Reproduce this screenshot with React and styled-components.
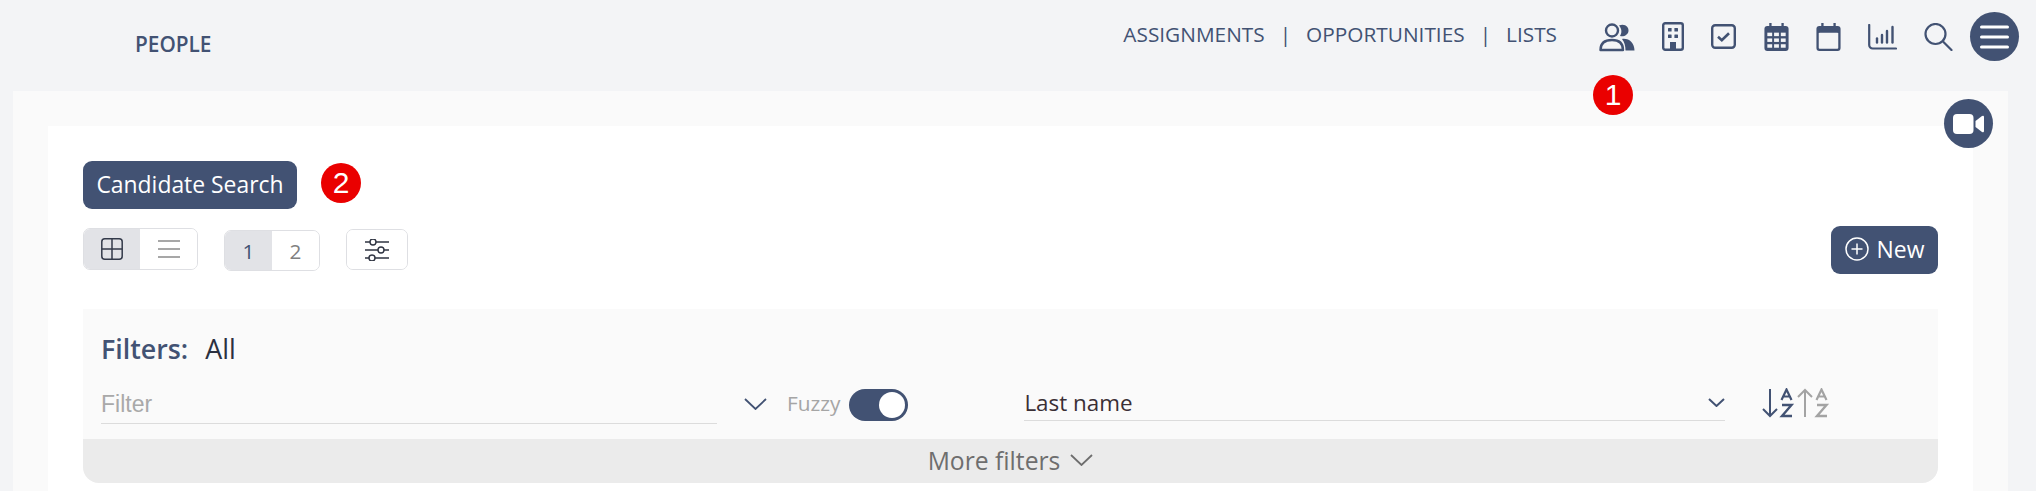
import React from "react";
import styled, { createGlobalStyle } from "styled-components";

const navy = "#425273";

const Global = createGlobalStyle`
  html, body { margin: 0; padding: 0; height: 100%; overflow: hidden; background: #f3f4f6; }
  body { font-family: "Open Sans", "Liberation Sans", sans-serif; color: ${navy}; }
  #root { position: relative; height: 491px; overflow: hidden; }
  * { box-sizing: border-box; }
`;

const Header = styled.header`
  height: 91px;
  display: flex;
  align-items: flex-start;
  padding: 12px 17px 0 135px;
  position: relative;
`;
const Brand = styled.div`
  font-size: 20.8px;
  font-weight: 600;
  line-height: 24px;
  margin-top: 20px;
  flex: 1;
`;
const Nav = styled.nav`
  display: flex;
  gap: 15px;
  font-size: 20.8px;
  line-height: 24px;
  margin-top: 10px;
  margin-right: 42px;
`;
const IconRow = styled.div`
  display: flex;
  align-items: center;
  height: 49px;
`;
const IconSlot = styled.span`
  display: flex;
  justify-content: center;
  width: ${p => p.$w}px;
  margin-right: ${p => p.$gap || 0}px;
  color: ${navy};
`;
const RoundButton = styled.div`
  width: 49px;
  height: 49px;
  border-radius: 50%;
  background: ${navy};
  display: flex;
  align-items: center;
  justify-content: center;
`;
const VideoButton = styled(RoundButton)`
  position: absolute;
  left: 1944px;
  top: 99px;
`;
const Badge = styled.span`
  position: absolute;
  left: ${p => p.$x}px;
  top: ${p => p.$y}px;
  width: 40px;
  height: 40px;
  border-radius: 50%;
  background: #ea0000;
  color: #fff;
  font-family: "Liberation Sans", Arial, sans-serif;
  font-size: 30px;
  line-height: 40px;
  text-align: center;
`;
const Outer = styled.main`
  margin: 0 28px 0 13px;
  padding: 35px 35px 0;
  background: #fafafa;
  height: 400px;
`;
const Card = styled.section`
  background: #fff;
  height: 365px;
  padding: 35px 35px 0;
`;
const Solid = styled.button`
  background: ${navy};
  color: #fff;
  border: 0;
  border-radius: 9px;
  font-family: inherit;
  font-size: 22.9px;
  height: 48px;
  display: flex;
  align-items: center;
  justify-content: center;
  gap: 8px;
  padding: 0 0 2px;
  width: ${p => p.$w}px;
  margin-top: ${p => p.$top || 0}px;
`;
const Toolbar = styled.div`
  display: flex;
  align-items: flex-start;
  margin-top: 19px;
  height: 64px;
`;
const Seg = styled.div`
  display: flex;
  height: ${p => p.$h}px;
  margin-top: ${p => p.$top}px;
  margin-right: ${p => p.$right}px;
  border: 1px solid #dedfe3;
  border-radius: 7px;
  overflow: hidden;
`;
const SegItem = styled.div`
  width: ${p => p.$w}px;
  display: flex;
  align-items: center;
  justify-content: center;
  background: ${p => (p.$on ? "#e2e3e7" : "#fff")};
  color: ${p => (p.$on ? navy : "#808080")};
  font-size: 20.8px;
`;
const Spacer = styled.div`
  flex: 1;
`;
const FilterPanel = styled.div`
  background: #fafafa;
  border-radius: 0 0 16px 16px;
  overflow: hidden;
  margin-top: 17px;
  height: 174px;
  display: flex;
  flex-direction: column;
`;
const FilterBody = styled.div`
  height: 130px;
  padding: 22px 18px 0;
`;
const FilterTitle = styled.div`
  font-size: 26.8px;
  line-height: 36px;
  display: flex;
  gap: 17px;
`;
const FilterLabel = styled.span`
  font-weight: 600;
`;
const FilterValue = styled.span`
  color: #2b3040;
`;
const FilterRow = styled.div`
  display: flex;
  align-items: flex-start;
  margin-top: 17px;
`;
const Underlined = styled.div`
  width: ${p => p.$w}px;
  height: ${p => p.$h}px;
  border-bottom: 1.5px solid #dcdcdc;
  display: flex;
  justify-content: space-between;
  align-items: center;
`;
const Placeholder = styled.span`
  font-family: "Liberation Sans", Arial, sans-serif;
  font-size: 23px;
  color: #a9a9a9;
  line-height: 32px;
`;
const SelectValue = styled.span`
  font-size: 22.4px;
  line-height: 30px;
  color: #3a2f35;
  padding-top: 2px;
`;
const ChevronSlot = styled.span`
  display: flex;
  margin: 14px 0 0 27px;
`;
const Fuzzy = styled.span`
  color: #a5a5a5;
  font-size: 20.8px;
  line-height: 30px;
  margin: 4px 9px 0 20px;
`;
const Toggle = styled.span`
  width: 59px;
  height: 32px;
  margin-top: 5px;
  margin-right: 116px;
  border-radius: 16px;
  background: ${navy};
  position: relative;
  flex: none;
`;
const Knob = styled.span`
  position: absolute;
  right: 3px;
  top: 3px;
  width: 26px;
  height: 26px;
  border-radius: 50%;
  background: #fff;
`;
const SortIcons = styled.div`
  display: flex;
  gap: 2px;
  margin: 4px 0 0 37px;
`;
const MoreBar = styled.div`
  height: 44px;
  background: #ebebeb;
  display: flex;
  align-items: center;
  justify-content: center;
  gap: 10px;
  font-size: 24.7px;
  color: #6e6e6e;
  padding-bottom: 2px;
`;

const Users = () => (
  <svg width="36" height="30" viewBox="0 0 36 30" fill="none" stroke="currentColor" strokeWidth="2.4">
    <circle cx="13" cy="8.5" r="6" />
    <path d="M1.5 28 C1.5 21 6 18 13 18 C20 18 24 21 24 28 Z" strokeLinejoin="round" />
    <path d="M20 3.4 C26 1 30 5 29.5 9 C29 13 25 15 21 14 C23 10.5 23 7 20 3.4 Z" fill="currentColor" stroke="none" />
    <path d="M23 17 C30 16 35.5 21 35.5 28.5 L26.5 28.5 C26.5 24 25.5 20 23 17 Z" fill="currentColor" stroke="none" />
  </svg>
);
const Building = () => (
  <svg width="22" height="29" viewBox="0 0 22 29" fill="none" stroke="currentColor">
    <rect x="1.2" y="1.2" width="19.6" height="26.6" rx="2" strokeWidth="2.4" />
    <g fill="currentColor" stroke="none">
      <rect x="6" y="6" width="3.6" height="3.6" rx=".5" />
      <rect x="12.4" y="6" width="3.6" height="3.6" rx=".5" />
      <rect x="6" y="12.4" width="3.6" height="3.6" rx=".5" />
      <rect x="12.4" y="12.4" width="3.6" height="3.6" rx=".5" />
      <rect x="8" y="20" width="6" height="8" />
    </g>
  </svg>
);
const CheckBox = () => (
  <svg width="25" height="25" viewBox="0 0 25 25" fill="none" stroke="currentColor" strokeWidth="2.4">
    <rect x="1.2" y="1.2" width="22.6" height="22.6" rx="3" />
    <path d="M7 12.8 L10.8 16.2 L18 9.2" strokeWidth="2.6" />
  </svg>
);
const CalendarGrid = () => (
  <svg width="25" height="28" viewBox="0 0 25 29">
    <path fill="currentColor" d="M5 0h2.4v3H17.6V0H20v3h2a3 3 0 0 1 3 3v20a3 3 0 0 1-3 3H3a3 3 0 0 1-3-3V6a3 3 0 0 1 3-3h2Z" />
    <g fill="#f3f4f6">
      <rect x="3" y="10" width="5" height="3.6" /><rect x="10" y="10" width="5" height="3.6" /><rect x="17" y="10" width="5" height="3.6" />
      <rect x="3" y="16" width="5" height="3.6" /><rect x="10" y="16" width="5" height="3.6" /><rect x="17" y="16" width="5" height="3.6" />
      <rect x="3" y="22" width="5" height="3.6" /><rect x="10" y="22" width="5" height="3.6" /><rect x="17" y="22" width="5" height="3.6" />
    </g>
  </svg>
);
const Calendar = () => (
  <svg width="25" height="28" viewBox="0 0 25 29">
    <path fill="currentColor" d="M5 0h2.4v3H17.6V0H20v3h2a3 3 0 0 1 3 3v20a3 3 0 0 1-3 3H3a3 3 0 0 1-3-3V6a3 3 0 0 1 3-3h2Z" />
    <rect x="2.4" y="10" width="20.2" height="16.6" rx="1" fill="#f3f4f6" />
  </svg>
);
const Chart = () => (
  <svg width="29" height="26" viewBox="0 0 29 26" fill="none" stroke="currentColor" strokeLinecap="round">
    <path d="M1.2 1 V21 a3.5 3.5 0 0 0 3.5 3.5 H28" strokeWidth="2.2" />
    <g strokeWidth="2.4">
      <path d="M9 14.5V18.5" /><path d="M14 11V18.5" /><path d="M19 7V18.5" /><path d="M24.5 3V18.5" />
    </g>
  </svg>
);
const Search = () => (
  <svg width="29" height="28" viewBox="0 0 29 28" fill="none" stroke="currentColor" strokeWidth="2.2" strokeLinecap="round">
    <circle cx="11.5" cy="11" r="10" />
    <path d="M19 18.5 L27.5 27" />
  </svg>
);
const Burger = () => (
  <svg width="29" height="24" viewBox="0 0 29 24" stroke="#fff" strokeWidth="3" strokeLinecap="round">
    <path d="M1.5 2H27.5M1.5 12H27.5M1.5 22H27.5" />
  </svg>
);
const Video = () => (
  <svg width="31" height="20" viewBox="0 0 31 20" fill="#fff">
    <rect x="0" y="0" width="20.5" height="20" rx="4" />
    <path d="M22.5 7 L29 2 Q31 1 31 3 V17 Q31 19 29 18 L22.5 13 Z" />
  </svg>
);
const GridIcon = () => (
  <svg width="22" height="22" viewBox="0 0 22 22" fill="none" stroke="#333a4a" strokeWidth="1.5">
    <rect x=".8" y=".8" width="20.4" height="20.4" rx="3" />
    <path d="M11 1V21M1 11H21" />
  </svg>
);
const ListIcon = () => (
  <svg width="22" height="18" viewBox="0 0 22 18" stroke="#8a8a8a" strokeWidth="1.5">
    <path d="M0 1H22M0 9H22M0 17H22" />
  </svg>
);
const Sliders = () => (
  <svg width="26" height="22" viewBox="0 0 26 22" fill="#fff" stroke="#2f3442" strokeWidth="1.4">
    <path d="M1 3H25M1 11H25M1 19H25" />
    <circle cx="9" cy="3" r="3" /><circle cx="17" cy="11" r="3" /><circle cx="8" cy="19" r="3" />
  </svg>
);
const Plus = () => (
  <svg width="24" height="24" viewBox="0 0 24 24" fill="none" stroke="#fff" strokeWidth="1.5">
    <circle cx="12" cy="12" r="11" />
    <path d="M12 6.5V17.5M6.5 12H17.5" />
  </svg>
);
const Chevron = ({ w = 23, h = 12, color = navy, sw = 1.8 }) => (
  <svg width={w} height={h} viewBox={`0 0 ${w} ${h}`} fill="none" stroke={color} strokeWidth={sw}>
    <path d={`M1 1 L${w / 2} ${h - 1} L${w - 1} 1`} />
  </svg>
);
const SortDown = ({ color, up }) => (
  <svg width="33" height="30" viewBox="0 0 33 30" fill="none" stroke={color}>
    {up ? (
      <path d="M8 29V2M1 9L8 2L15 9" strokeWidth="2" />
    ) : (
      <path d="M8 1V28M1 21L8 28L15 21" strokeWidth="2" />
    )}
    <path d="M19.5 12 L24.5 1.5 L29.5 12M21 8.5H28" strokeWidth="2.2" />
    <path d="M20 17H29.5L20 28H30" strokeWidth="2.4" />
  </svg>
);

export default function App() {
  return (
    <>
      <Global />
      <Header>
        <Brand>PEOPLE</Brand>
        <Nav>
          <span>ASSIGNMENTS</span>
          <span>|</span>
          <span>OPPORTUNITIES</span>
          <span>|</span>
          <span>LISTS</span>
        </Nav>
        <IconRow>
          <IconSlot $w={36} $gap={27}><Users /></IconSlot>
          <IconSlot $w={22} $gap={27}><Building /></IconSlot>
          <IconSlot $w={25} $gap={28}><CheckBox /></IconSlot>
          <IconSlot $w={25} $gap={27}><CalendarGrid /></IconSlot>
          <IconSlot $w={25} $gap={27}><Calendar /></IconSlot>
          <IconSlot $w={29} $gap={27}><Chart /></IconSlot>
          <IconSlot $w={29} $gap={17}><Search /></IconSlot>
          <RoundButton><Burger /></RoundButton>
        </IconRow>
      </Header>
      <Outer>
        <Card>
          <Solid $w={214}>Candidate Search</Solid>
          <Toolbar>
            <Seg $h={42} $top={0} $right={26}>
              <SegItem $w={56} $on><GridIcon /></SegItem>
              <SegItem $w={57}><ListIcon /></SegItem>
            </Seg>
            <Seg $h={41} $top={2} $right={26}>
              <SegItem $w={47} $on>1</SegItem>
              <SegItem $w={47}>2</SegItem>
            </Seg>
            <Seg $h={41} $top={1} $right={0}>
              <SegItem $w={60}><Sliders /></SegItem>
            </Seg>
            <Spacer />
            <Solid $w={107} $top={-2}><Plus />New</Solid>
          </Toolbar>
          <FilterPanel>
            <FilterBody>
              <FilterTitle>
                <FilterLabel>Filters:</FilterLabel>
                <FilterValue>All</FilterValue>
              </FilterTitle>
              <FilterRow>
                <Underlined $w={616} $h={40}><Placeholder>Filter</Placeholder></Underlined>
                <ChevronSlot><Chevron /></ChevronSlot>
                <Fuzzy>Fuzzy</Fuzzy>
                <Toggle><Knob /></Toggle>
                <Underlined $w={701} $h={37}>
                  <SelectValue>Last name</SelectValue>
                  <Chevron w={17} h={9} sw={2} />
                </Underlined>
                <SortIcons>
                  <SortDown color={navy} />
                  <SortDown color="#a3a3a3" up />
                </SortIcons>
              </FilterRow>
            </FilterBody>
            <MoreBar>More filters <Chevron color="#6e6e6e" /></MoreBar>
          </FilterPanel>
        </Card>
      </Outer>
      <VideoButton><Video /></VideoButton>
      <Badge $x={1593} $y={75}>1</Badge>
      <Badge $x={321} $y={163}>2</Badge>
    </>
  );
}
